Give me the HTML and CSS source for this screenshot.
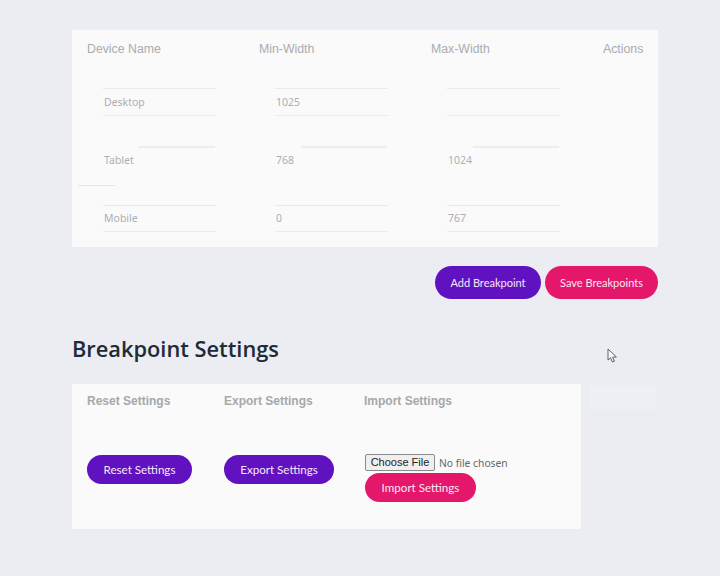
FILE: index.html
```html
<!DOCTYPE html>
<html lang="en">
<head>
    <meta charset="UTF-8">
    <meta name="viewport" content="width=device-width, initial-scale=1.0">
    <title>Breakpoint Settings</title>
    <link rel="stylesheet" href="styles.css">
</head>
<body>
    <div class="wrap">
        <div class="card breakpoints">
            <div class="row head">
                <div>Device Name</div>
                <div>Min-Width</div>
                <div>Max-Width</div>
                <div class="actions">Actions</div>
            </div>
            <div class="row desktop">
                <div class="cell"><input type="text" value="Desktop"></div>
                <div class="cell"><input type="text" value="1025"></div>
                <div class="cell"><input type="text" value=""></div>
            </div>
            <div class="row tablet">
                <div class="cell"><input type="text" value="Tablet"></div>
                <div class="cell"><input type="text" value="768"></div>
                <div class="cell"><input type="text" value="1024"></div>
            </div>
            <div class="row mobile">
                <div class="cell"><input type="text" value="Mobile"></div>
                <div class="cell"><input type="text" value="0"></div>
                <div class="cell"><input type="text" value="767"></div>
            </div>
        </div>

        <div class="btn-row">
            <button class="btn purple add">Add Breakpoint</button>
            <button class="btn pink save">Save Breakpoints</button>
        </div>

        <h2>Breakpoint Settings</h2>

        <div class="card settings">
            <div class="col col-reset">
                <div class="label">Reset Settings</div>
                <button class="btn purple big reset">Reset Settings</button>
            </div>
            <div class="col col-export">
                <div class="label">Export Settings</div>
                <button class="btn purple big export">Export Settings</button>
            </div>
            <div class="col col-import">
                <div class="label">Import Settings</div>
                <div class="file-row">
                    <span class="choose">Choose File</span>
                    <span class="no-file">No file chosen</span>
                </div>
                <button class="btn pink big import">Import Settings</button>
            </div>
        </div>
    </div>

    <div class="ghost"></div>
    <div class="smear"></div>

    <svg class="cursor" width="12" height="16" viewBox="0 0 12 16">
        <path d="M1 1 L1 12 L3.6 9.8 L5.4 14 L7.4 13.2 L5.6 9.2 L9.4 9 Z" fill="#f6f7f9" stroke="#5d6068" stroke-width="1"/>
    </svg>
</body>
</html>
```

FILE: styles.css
```css
* {
    box-sizing: border-box;
}
body {
    font-family: "Liberation Sans", Arial, sans-serif;
    margin: 0;
    padding: 0;
    background-color: #ebedf2;
    color: #333;
    height: 576px;
    overflow: hidden;
}
.wrap {
    padding: 30px 62px 0 72px;
}
.card {
    background: #fafafb;
}
.breakpoints {
    height: 217px;
    padding-top: 10px;
}
.row {
    display: grid;
    grid-template-columns: 172px 172px 172px 70px;
    height: 58px;
    padding-left: 15px;
}
.row.head {
    height: 39px;
    font-size: 12.3px;
    line-height: 18px;
    color: #a9acb1;
}
.cell {
    padding-left: 16px;
    padding-top: 9px;
}
.cell input {
    display: block;
    width: 113px;
    height: 28px;
    padding: 0 1px 2px;
    border: none;
    border-top: 1px solid #e6e9f2;
    border-bottom: 1px solid #e9ebf0;
    background: transparent;
    font-family: "Noto Sans", sans-serif;
    font-size: 10.5px;
    color: #acafb3;
}
.desktop .cell input {
    padding-bottom: 0;
}
.tablet .cell input {
    border: none;
    margin-top: -1px;
}
.tablet .cell::before {
    content: "";
    display: block;
    height: 2px;
    width: 86px;
    margin-left: 26px;
    background: #ebedee;
}
.tablet .cell:first-child::before {
    width: 77px;
    margin-left: 35px;
}
.mobile .cell {
    padding-top: 10px;
}
.mobile .cell input {
    height: 27px;
}
.btn-row {
    display: flex;
    justify-content: flex-end;
    gap: 4px;
    margin-top: 19px;
}
.btn {
    height: 33px;
    border: none;
    border-radius: 17px;
    padding: 0;
    color: #f8e8f6;
    font-family: Lato, "Noto Sans", sans-serif;
    font-size: 11px;
    cursor: pointer;
}
.btn.big {
    height: 29px;
    border-radius: 15px;
    font-size: 11.6px;
}
.purple {
    background-color: #6011c0;
}
.pink {
    background-color: #e4176a;
}
.add {
    width: 106px;
}
.save {
    width: 113px;
}
h2 {
    margin: 33px 0 18px;
    font-family: "Open Sans", sans-serif;
    font-size: 21.8px;
    font-weight: 600;
    line-height: 34px;
    color: #212b36;
}
.settings {
    display: flex;
    width: 509px;
    height: 145px;
    padding: 9px 0 0 15px;
}
.col-reset {
    width: 137px;
}
.col-export {
    width: 140px;
}
.label {
    font-size: 12px;
    font-weight: bold;
    line-height: 16px;
    color: #a5a8ac;
    margin-bottom: 46px;
}
.col-import .label {
    margin-bottom: 45px;
}
.reset {
    display: block;
    width: 105px;
}
.export {
    display: block;
    width: 110px;
}
.file-row {
    display: flex;
    align-items: center;
    height: 17px;
    margin-left: 1px;
}
.choose {
    height: 17px;
    width: 70px;
    border: 1px solid #8a8a8a;
    border-radius: 2px;
    background: #efefef;
    color: #222;
    font-size: 11px;
    line-height: 15px;
    text-align: center;
}
.no-file {
    margin-left: 4px;
    font-family: "Noto Sans", sans-serif;
    font-size: 10.3px;
    color: #666;
}
.import {
    display: block;
    width: 111px;
    margin-top: 2px;
    margin-left: 1px;
}
/* leftovers of the previous frame, they lie over the page */
.ghost {
    position: absolute;
    left: 590px;
    top: 385px;
    width: 66px;
    height: 24px;
    background: #edf0f4;
}
.smear {
    position: absolute;
    left: 78px;
    top: 185px;
    width: 37px;
    height: 1px;
    background: #e4e6ea;
}
.cursor {
    position: absolute;
    left: 607px;
    top: 348px;
}
```
